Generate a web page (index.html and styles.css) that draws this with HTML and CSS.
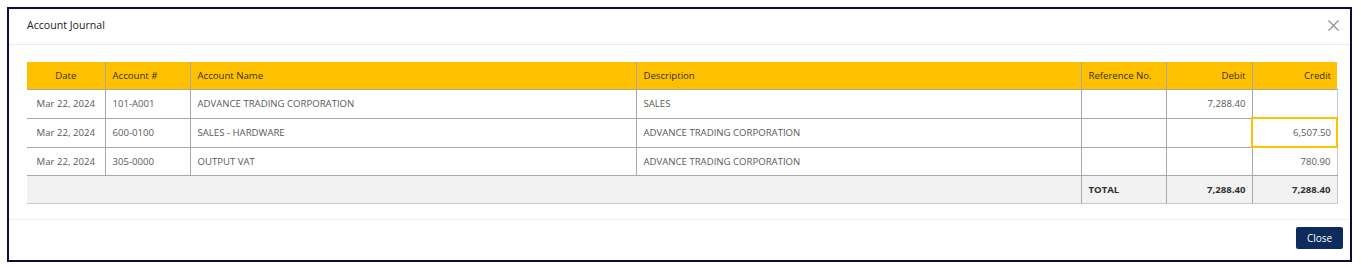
FILE: index.html
```html
<!DOCTYPE html>
<html lang="en">
<head>
<meta charset="UTF-8">
<meta name="viewport" content="width=device-width, initial-scale=1.0">
<title>Account Journal</title>
<link rel="stylesheet" href="styles.css">
</head>
<body>

<div class="modal">
  <div class="modal-header">
    <h1>Account Journal</h1>
    <svg class="close-x" width="11" height="11" viewBox="0 0 11 11">
      <path d="M0.5 0.5 L10.5 10.5 M10.5 0.5 L0.5 10.5" stroke="#8c8c8c" stroke-width="1.1" fill="none"/>
    </svg>
  </div>
  <div class="modal-body">
    <table class="journal">
      <colgroup>
        <col style="width:78px">
        <col style="width:85px">
        <col style="width:446px">
        <col style="width:445px">
        <col style="width:85px">
        <col style="width:86px">
        <col style="width:85px">
      </colgroup>
      <thead>
        <tr>
          <th class="center">Date</th>
          <th>Account #</th>
          <th>Account Name</th>
          <th>Description</th>
          <th>Reference No.</th>
          <th class="num">Debit</th>
          <th class="num">Credit</th>
        </tr>
      </thead>
      <tbody>
        <tr>
          <td class="center">Mar 22, 2024</td>
          <td>101-A001</td>
          <td>ADVANCE TRADING CORPORATION</td>
          <td>SALES</td>
          <td></td>
          <td class="num">7,288.40</td>
          <td class="num"></td>
        </tr>
        <tr>
          <td class="center">Mar 22, 2024</td>
          <td>600-0100</td>
          <td>SALES - HARDWARE</td>
          <td>ADVANCE TRADING CORPORATION</td>
          <td></td>
          <td class="num"></td>
          <td class="num selected">6,507.50</td>
        </tr>
        <tr>
          <td class="center">Mar 22, 2024</td>
          <td>305-0000</td>
          <td>OUTPUT VAT</td>
          <td>ADVANCE TRADING CORPORATION</td>
          <td></td>
          <td class="num"></td>
          <td class="num">780.90</td>
        </tr>
        <tr class="total">
          <td colspan="4" class="blank"></td>
          <td>TOTAL</td>
          <td class="num">7,288.40</td>
          <td class="num">7,288.40</td>
        </tr>
      </tbody>
    </table>
  </div>
  <div class="modal-footer">
    <button class="btn-close">Close</button>
  </div>
</div>

</body>
</html>
```

FILE: styles.css
```css
body {
  margin: 0;
  padding: 7px 9px 0 7px;
  font-family: 'Open Sans', 'Noto Sans', sans-serif;
  background-color: #fff;
}
.modal {
  height: 251px;
  border: 2px solid #0b0b3d;
  background-color: #fff;
  display: flex;
  flex-direction: column;
}
.modal-header {
  height: 36px;
  box-sizing: border-box;
  border-bottom: 1px solid #e9ecef;
  display: flex;
  align-items: center;
  justify-content: space-between;
  padding: 0 11px 4px 18px;
}
.modal-header h1 {
  margin: 0;
  font-size: 10.6px;
  font-weight: 400;
  color: #222;
}
.close-x {
  display: block;
  margin-top: 1px;
}
.modal-body {
  padding: 17px 13px 0 18px;
  height: 175px;
  border-bottom: 1px solid #eeeff1;
  box-sizing: border-box;
}
.journal {
  width: 100%;
  border-collapse: collapse;
  table-layout: fixed;
  font-size: 9.6px;
}
.journal th {
  background-color: #ffc000;
  color: #333;
  font-weight: 400;
  text-align: left;
  height: 27px;
  padding: 0 7px;
  border-left: 1px solid #a8a8a8;
  border-bottom: 1px solid #a8a8a8;
}
.journal th:first-child {
  border-left: none;
}
.journal td {
  height: 27px;
  padding: 0 7px;
  color: #5a5a5a;
  border-left: 1px solid #a8a8a8;
  border-bottom: 1px solid #a8a8a8;
  white-space: nowrap;
}
.journal tr td:first-child {
  border-left: none;
}
.journal td:last-child {
  border-right: 1px solid #ccc;
}
.journal .center {
  text-align: center;
}
.journal .num {
  text-align: right;
  padding-right: 6px;
}
.journal td.selected {
  border: 2px solid #ffc000;
  padding-right: 5px;
}
.journal .total td {
  background-color: #f2f2f2;
  color: #333;
  font-weight: 700;
  border-bottom: 1px solid #c8c8c8;
}
.modal-footer {
  flex: 1;
  display: flex;
  align-items: center;
  justify-content: flex-end;
  padding: 0 7px;
}
.btn-close {
  width: 47px;
  height: 22px;
  background-color: #0d2b5c;
  color: #fff;
  border: none;
  border-radius: 2px;
  font-family: 'Open Sans', 'Noto Sans', sans-serif;
  font-size: 10px;
  padding: 0;
  margin-top: -4px;
}
```
